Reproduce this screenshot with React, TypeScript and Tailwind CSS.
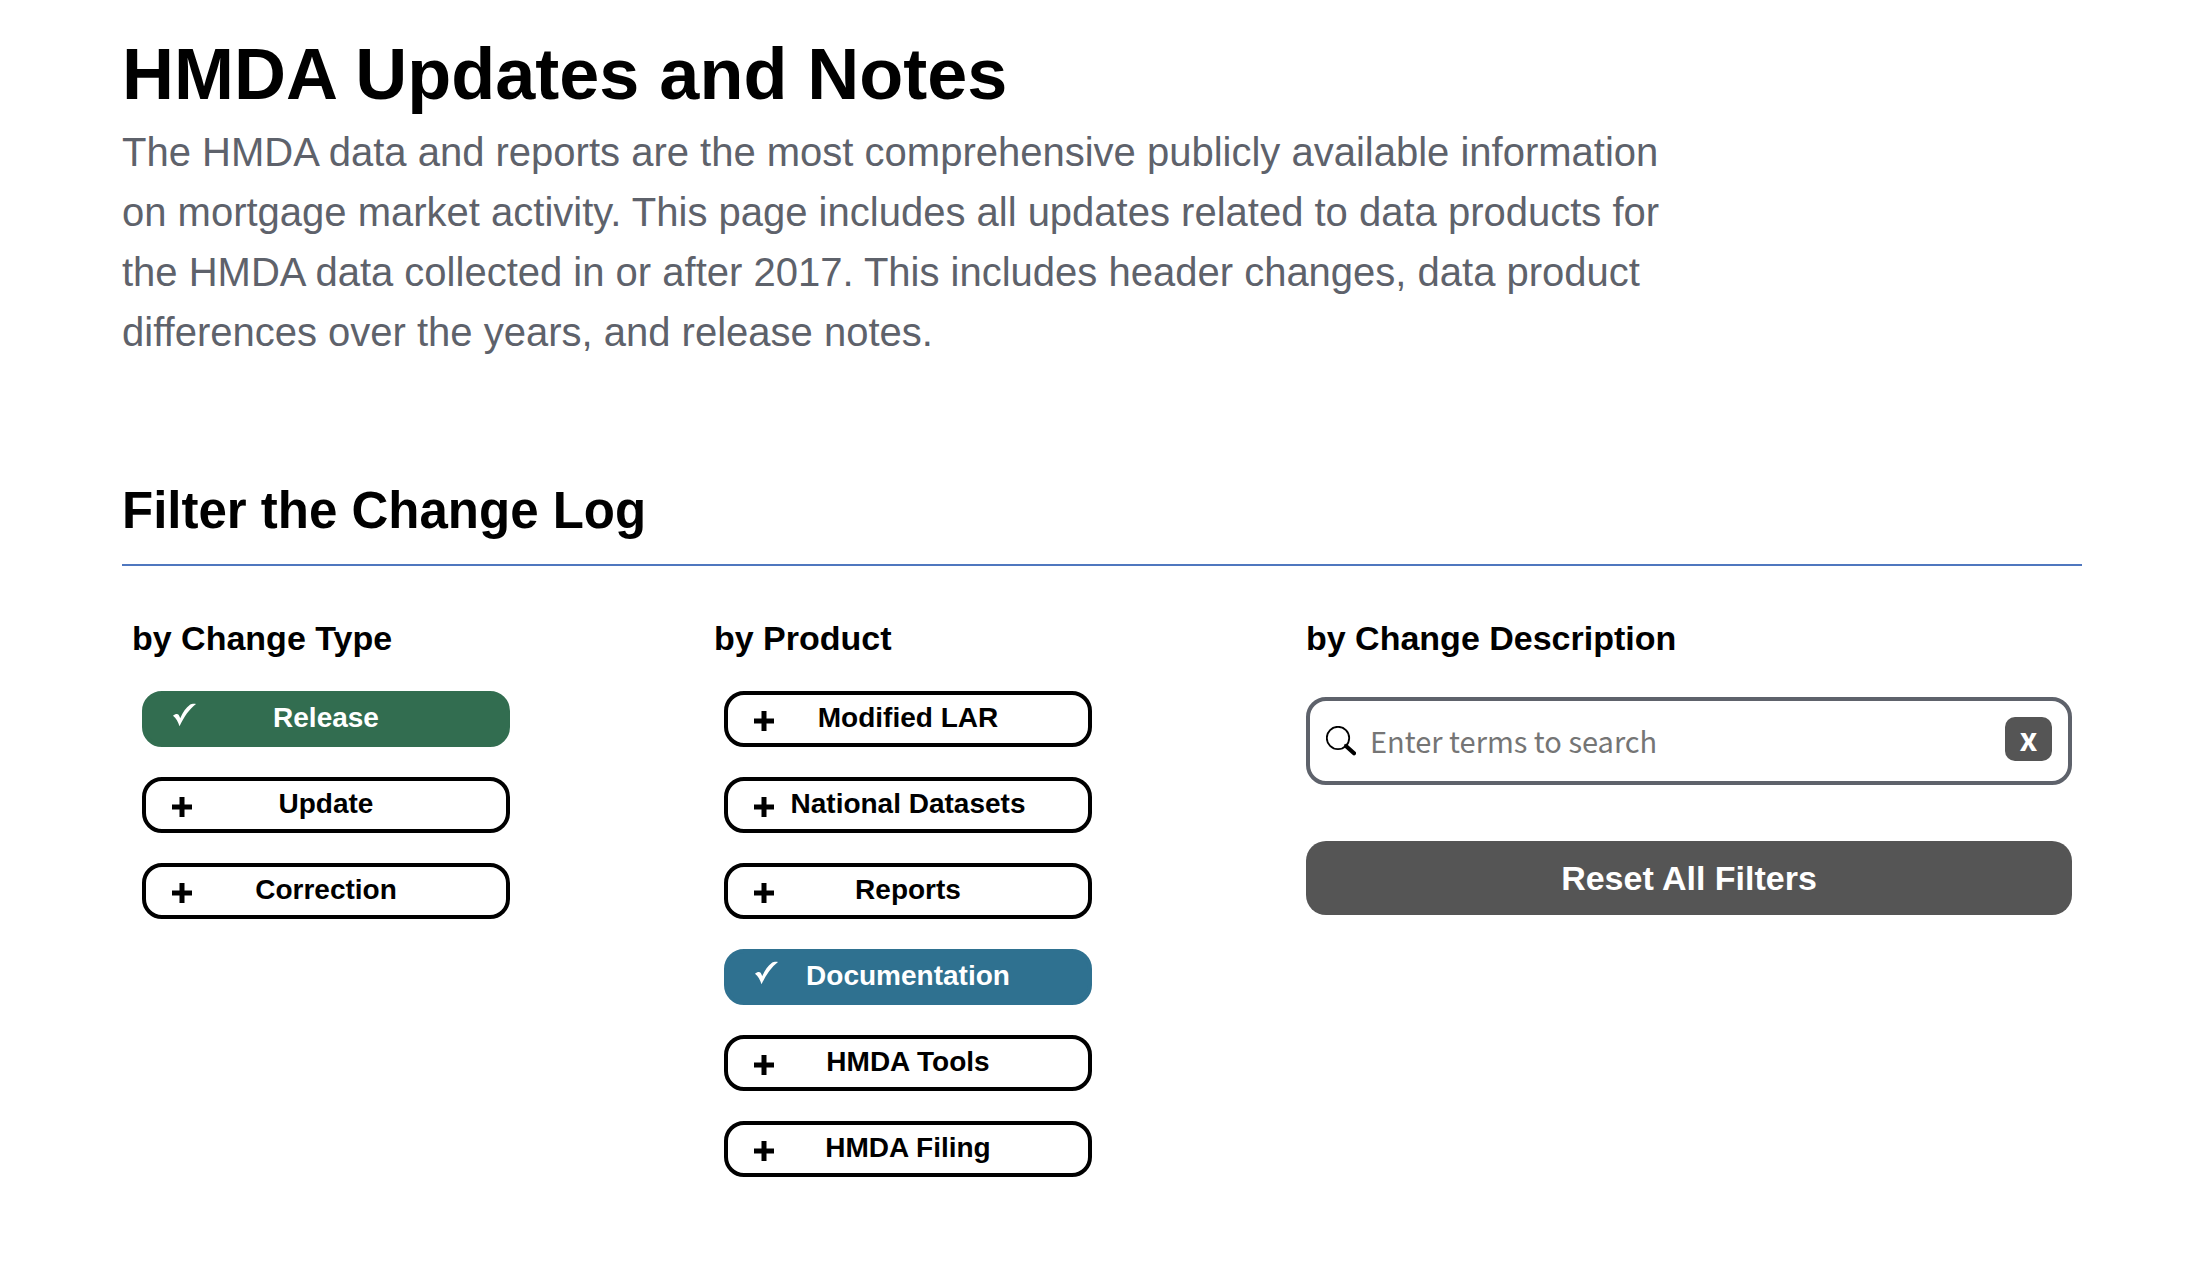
import { useState } from "react";

type Option = { label: string; active: string };

const green = "bg-[#326d50] border-[#326d50] text-white";
const blue = "bg-[#2f7190] border-[#2f7190] text-white";

const changeTypes: Option[] = [
  { label: "Release", active: green },
  { label: "Update", active: green },
  { label: "Correction", active: green },
];

const products: Option[] = [
  { label: "Modified LAR", active: blue },
  { label: "National Datasets", active: blue },
  { label: "Reports", active: blue },
  { label: "Documentation", active: blue },
  { label: "HMDA Tools", active: blue },
  { label: "HMDA Filing", active: blue },
];

function CheckIcon() {
  return (
    <svg viewBox="0 0 24 24" className="mb-2 size-6" fill="currentColor" aria-hidden="true">
      <path d="M1 12.700C3 11 5.500 10.500 6.600 11.800C7.400 12.800 7.800 14 8.200 15.200C10.800 9.500 14 4.500 18 1.800C19.500 .8 22 .6 24 1C17.500 6 12 13.500 7.500 23.300C6.300 19 4 15 1 12.700Z" />
    </svg>
  );
}

function PlusIcon() {
  return (
    <svg viewBox="0 0 20 20" className="mt-1 size-5" fill="currentColor" aria-hidden="true">
      <path d="M7.500 0h5v7.500H20v5h-7.500V20h-5v-7.500H0v-5h7.500z" />
    </svg>
  );
}

function SearchIcon() {
  return (
    <svg viewBox="0 0 30 30" className="size-[30px] shrink-0" aria-hidden="true">
      <circle cx="12" cy="12" r="11.200" fill="none" stroke="#000" strokeWidth="1.800" />
      <path d="M18.500 18.500L28 27.200" stroke="#000" strokeWidth="1.800" />
      <path d="M20.500 20.500L28 27.300" stroke="#000" strokeWidth="4.200" strokeLinecap="round" />
    </svg>
  );
}

function FilterGroup({
  title,
  options,
  selected,
  onToggle,
}: {
  title: string;
  options: Option[];
  selected: string[];
  onToggle: (label: string) => void;
}) {
  return (
    <section>
      <h3 className="text-[34px] leading-10 font-bold">{title}</h3>
      <ul className="mt-[33px] ml-[10px] flex w-[368px] flex-col gap-[30px]">
        {options.map((o) => {
          const on = selected.includes(o.label);
          return (
            <li key={o.label}>
              <button
                type="button"
                aria-pressed={on}
                onClick={() => onToggle(o.label)}
                className={`relative flex h-14 w-full items-center justify-center rounded-[20px] border-4 text-[28px] leading-8 font-bold ${
                  on ? o.active : "border-black bg-white text-black"
                }`}
              >
                <span className="absolute inset-y-0 left-[26px] flex items-center">
                  {on ? <CheckIcon /> : <PlusIcon />}
                </span>
                <span className="pb-0.5">{o.label}</span>
              </button>
            </li>
          );
        })}
      </ul>
    </section>
  );
}

export default function App() {
  const [selected, setSelected] = useState(["Release", "Documentation"]);
  const [query, setQuery] = useState("");
  const toggle = (label: string) =>
    setSelected((s) => (s.includes(label) ? s.filter((x) => x !== label) : [...s, label]));

  return (
    <main className="min-h-screen bg-white pt-8 pr-[106px] pb-20 pl-[122px] font-['Liberation_Sans',Arial,sans-serif] text-black">
      <header>
        <h1 className="text-[72px] leading-[84px] font-bold">HMDA Updates and Notes</h1>
        <p className="mt-1.5 max-w-[1560px] text-[40px] leading-[60px] text-[#5e626b]">
          The HMDA data and reports are the most comprehensive publicly available information on
          mortgage market activity. This page includes all updates related to data products for the
          HMDA data collected in or after 2017. This includes header changes, data product
          differences over the years, and release notes.
        </p>
      </header>

      <h2 className="mt-[119px] border-b-2 border-[#4f77bf] pb-[23px] text-[51px] leading-[60px] font-bold">
        Filter the Change Log
      </h2>

      <div className="mx-[10px] mt-[52px] grid grid-cols-[582fr_592fr_766fr]">
        <FilterGroup
          title="by Change Type"
          options={changeTypes}
          selected={selected}
          onToggle={toggle}
        />
        <FilterGroup title="by Product" options={products} selected={selected} onToggle={toggle} />
        <section>
          <h3 className="text-[34px] leading-10 font-bold">
            <label htmlFor="search">by Change Description</label>
          </h3>
          <div className="mt-[39px] flex h-[88px] items-center rounded-[20px] border-4 border-[#5e626b] px-4">
            <SearchIcon />
            <input
              id="search"
              type="text"
              value={query}
              onChange={(e) => setQuery(e.target.value)}
              placeholder="Enter terms to search"
              className="mr-4 ml-3.5 min-w-0 flex-1 pb-0.5 font-['Noto_Sans_CJK_SC',sans-serif] text-[29px] leading-10 outline-none placeholder:text-[#757575]"
            />
            <button
              type="button"
              aria-label="Clear search"
              onClick={() => setQuery("")}
              className="mb-1 flex h-11 w-[47px] items-center justify-center rounded-[10px] bg-[#555] pb-1 font-['Noto_Sans_CJK_SC',sans-serif] text-[32px] leading-8 font-bold text-white"
            >
              x
            </button>
          </div>
          <button
            type="button"
            onClick={() => {
              setSelected([]);
              setQuery("");
            }}
            className="mt-14 h-[74px] w-full rounded-[20px] bg-[#555] text-[34px] leading-10 font-bold text-white"
          >
            Reset All Filters
          </button>
        </section>
      </div>
    </main>
  );
}
